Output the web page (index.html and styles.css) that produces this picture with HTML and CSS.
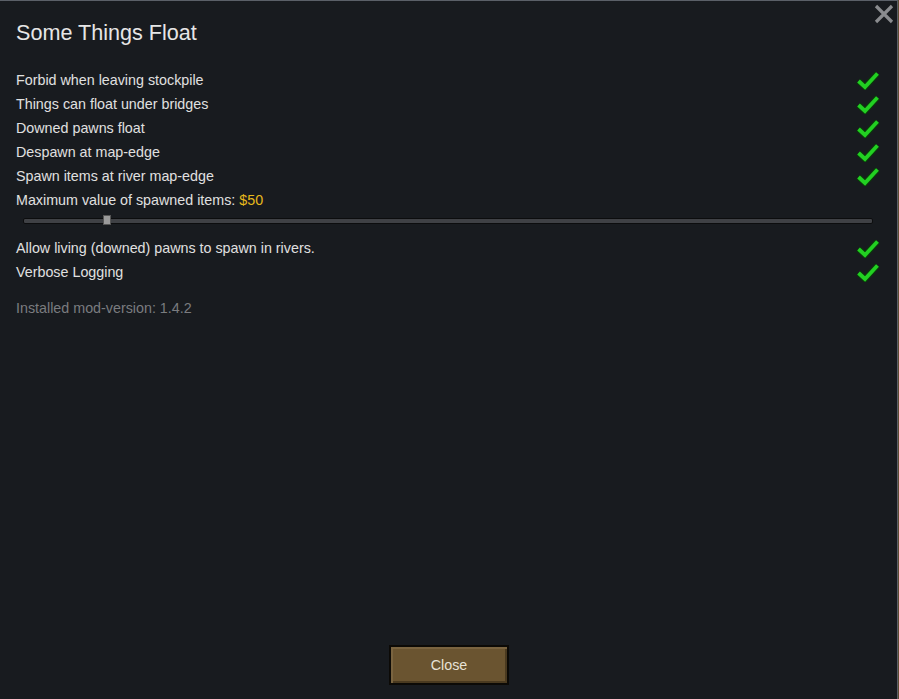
FILE: index.html
```html
<!DOCTYPE html>
<html>
<head>
<meta charset="utf-8">
<link rel="stylesheet" href="styles.css">
</head>
<body>
<div class="window">
  <button class="close-x" aria-label="Close">
    <svg width="20" height="20" viewBox="0 0 20 20"><path d="M2 2 L18 18 M18 2 L2 18" stroke="#8a8c8f" stroke-width="3.2" stroke-linecap="butt"/></svg>
  </button>
  <h1 class="title">Some Things Float</h1>
  <div class="options">
    <div class="row"><span>Forbid when leaving stockpile</span><svg class="check" viewBox="0 0 24 20"><use href="#ck"/></svg></div>
    <div class="row"><span>Things can float under bridges</span><svg class="check" viewBox="0 0 24 20"><use href="#ck"/></svg></div>
    <div class="row"><span>Downed pawns float</span><svg class="check" viewBox="0 0 24 20"><use href="#ck"/></svg></div>
    <div class="row"><span>Despawn at map-edge</span><svg class="check" viewBox="0 0 24 20"><use href="#ck"/></svg></div>
    <div class="row"><span>Spawn items at river map-edge</span><svg class="check" viewBox="0 0 24 20"><use href="#ck"/></svg></div>
    <div class="row"><span>Maximum value of spawned items: <span class="gold">$50</span></span></div>
    <div class="slider"><div class="track"></div><div class="thumb" style="left: 80px"></div></div>
    <div class="row"><span>Allow living (downed) pawns to spawn in rivers.</span><svg class="check" viewBox="0 0 24 20"><use href="#ck"/></svg></div>
    <div class="row"><span>Verbose Logging</span><svg class="check" viewBox="0 0 24 20"><use href="#ck"/></svg></div>
    <div class="version">Installed mod-version: 1.4.2</div>
  </div>
  <div class="footer"><button class="btn">Close</button></div>
</div>
<svg class="defs" width="0" height="0">
  <defs>
    <g id="ck"><path d="M2.5 11 L9 17 L21.5 3.5" fill="none" stroke="#0b3a0b" stroke-width="6.2" stroke-linejoin="miter"/><path d="M2.5 11 L9 17 L21.5 3.5" fill="none" stroke="#22d022" stroke-width="3.8" stroke-linejoin="miter"/></g>
  </defs>
</svg>
</body>
</html>
```
FILE: styles.css
```css
html, body { margin: 0; padding: 0; }
body {
  width: 899px; height: 699px;
  background: #5d4d33;
  font-family: "Liberation Sans", Arial, sans-serif;
  overflow: hidden;
}
.defs { position: absolute; }
.window {
  position: relative;
  box-sizing: border-box;
  width: 898px; height: 699px;
  background: #181b1f;
  border-top: 1px solid #5b6068;
  border-right: 1px solid #5b6068;
  padding: 0 16px 0 16px;
  display: flex; flex-direction: column;
}
.close-x {
  position: absolute; top: 3px; right: 3px;
  width: 20px; height: 20px; padding: 0; border: 0; background: none;
}
.close-x svg { display: block; }
.title {
  margin: 20px 0 0 0;
  font-weight: normal; font-size: 21.6px; line-height: 24px;
  color: #e6e6e6;
}
.options { margin-top: 23px; display: flex; flex-direction: column; }
.row {
  display: flex; justify-content: space-between; align-items: center;
  height: 24px; font-size: 14.3px; color: #e0e0e0;
}
.check {
  width: 24px; height: 20px; margin-right: 1px; display: block;
}
.gold { color: #e6b81c; }
.slider { position: relative; height: 24px; margin: 0 0 0 7px; width: 850px; }
.track {
  position: absolute; left: 0; right: 0; top: 6px; height: 4px;
  background: #3f4145; border: 1px solid #0c0d0e; border-radius: 2px;
}
.thumb {
  position: absolute; top: 3px; width: 8px; height: 10px;
  background: #9a9a9a; border: 1px solid #555; box-sizing: border-box;
}
.version { margin-top: 16px; font-size: 14.3px; color: #7a7c7f; }
.footer { margin-top: auto; display: flex; justify-content: center; padding: 0 0 14px 0; }
.btn {
  width: 120px; height: 40px;
  background: #6a5430;
  border: 2px solid #0c0a06;
  box-shadow: inset 2px 2px 0 #7a6440, inset -2px -2px 0 #4a3a20;
  color: #e8e2d6; font-family: "Liberation Sans", Arial, sans-serif; font-size: 14.3px;
  margin-left: 1px;
}
```
